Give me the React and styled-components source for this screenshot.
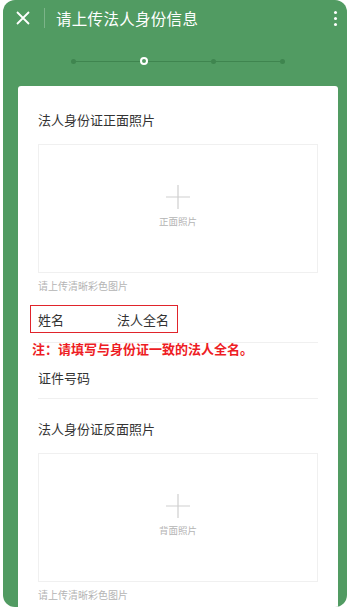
import React from "react";
import styled, { createGlobalStyle } from "styled-components";

const GlobalStyle = createGlobalStyle`
  html, body {
    margin: 0;
    padding: 0;
    background: #fff;
    font-family: "Noto Sans CJK SC", "Noto Sans", sans-serif;
  }
`;

const steps = ["done", "current", "todo", "todo"];

const UploadBlock = ({ title, placeholder, gap }) => (
  <Section $gap={gap}>
    <SectionTitle>{title}</SectionTitle>
    <UploadBox>
      <svg width="26" height="26" viewBox="0 0 26 26">
        <path d="M13 1v24M1 13h24" stroke="#cfcfcf" strokeWidth="1.2" />
      </svg>
      <UploadLabel>{placeholder}</UploadLabel>
    </UploadBox>
    <Hint>请上传清晰彩色图片</Hint>
  </Section>
);

const App = () => {
  return (
    <>
      <GlobalStyle />
      <Frame>
        <Header>
          <svg width="16" height="16" viewBox="0 0 16 16">
            <path d="M2 2l12 12M14 2L2 14" stroke="#fff" strokeWidth="1.8" />
          </svg>
          <Divider />
          <Title>请上传法人身份信息</Title>
          <Kebab>
            <i />
            <i />
            <i />
          </Kebab>
        </Header>
        <Steps>
          {steps.map((s, i) => (
            <React.Fragment key={i}>
              {i > 0 && <StepLine />}
              <StepDot $current={s === "current"} />
            </React.Fragment>
          ))}
        </Steps>
        <Card>
          <UploadBlock title="法人身份证正面照片" placeholder="正面照片" gap={25} />
          <NameRow>
            <Label>姓名</Label>
            <Value>法人全名</Value>
            <Highlight />
          </NameRow>
          <Note>注：请填写与身份证一致的法人全名。</Note>
          <Row>
            <Label>证件号码</Label>
          </Row>
          <UploadBlock title="法人身份证反面照片" placeholder="背面照片" gap={21} />
        </Card>
      </Frame>
    </>
  );
};

export default App;

const Frame = styled.div`
  margin: 0 3px;
  height: 607px;
  background: #519b62;
  border-radius: 12px;
  display: flex;
  flex-direction: column;
  overflow: hidden;
`;

const Header = styled.div`
  height: 36px;
  display: flex;
  align-items: center;
  padding: 0 10px 0 12px;
  color: #fff;
`;

const Divider = styled.div`
  width: 1px;
  height: 20px;
  background: rgba(255, 255, 255, 0.25);
  margin: 0 11px 0 13px;
`;

const Title = styled.div`
  flex: 1;
  font-size: 15.5px;
  letter-spacing: 0.3px;
`;

const Kebab = styled.div`
  display: flex;
  flex-direction: column;
  gap: 3px;
  i {
    width: 3px;
    height: 3px;
    border-radius: 50%;
    background: #fff;
  }
`;

const Steps = styled.div`
  height: 50px;
  display: flex;
  align-items: center;
  padding: 0 62px 0 68px;
`;

const StepLine = styled.div`
  flex: 1;
  height: 1px;
  background: #3f854f;
`;

const StepDot = styled.div`
  width: ${(p) => (p.$current ? "8px" : "5px")};
  height: ${(p) => (p.$current ? "8px" : "5px")};
  border-radius: 50%;
  box-sizing: border-box;
  background: ${(p) => (p.$current ? "transparent" : "#3f854f")};
  border: ${(p) => (p.$current ? "2px solid #fff" : "none")};
`;

const Card = styled.div`
  flex: 1;
  margin: 0 9px 0 15px;
  background: #fff;
  border-radius: 3px 3px 0 0;
  padding: 0 20px;
`;

const Section = styled.div`
  padding-top: ${(p) => p.$gap}px;
`;

const SectionTitle = styled.div`
  font-size: 13px;
  color: #333;
  line-height: 18px;
`;

const UploadBox = styled.div`
  margin-top: 15px;
  height: 121px;
  padding-bottom: 6px;
  border: 1px solid #f0f0f0;
  display: flex;
  flex-direction: column;
  align-items: center;
  justify-content: center;
  gap: 4px;
`;

const UploadLabel = styled.div`
  font-size: 9.5px;
  color: #b4b4b4;
`;

const Hint = styled.div`
  margin-top: 6px;
  font-size: 10px;
  color: #b4b4b4;
  line-height: 14px;
`;

const Row = styled.div`
  position: relative;
  height: 42px;
  display: flex;
  align-items: center;
  border-bottom: 1px solid #f0f0f0;
`;

const NameRow = styled(Row)`
  margin-top: 8px;
  height: 37px;
  padding-bottom: 4px;
`;

const Label = styled.div`
  width: 79px;
  font-size: 13px;
  color: #333;
`;

const Value = styled.div`
  font-size: 13px;
  color: #333;
`;

const Highlight = styled.div`
  position: absolute;
  left: -8px;
  top: 4px;
  width: 148px;
  height: 28px;
  box-sizing: border-box;
  border: 1.5px solid #e0242b;
`;

const Note = styled.div`
  margin: -1px 0 0 -6px;
  font-size: 13px;
  font-weight: bold;
  color: #ee1c24;
  line-height: 14px;
  position: relative;
`;
